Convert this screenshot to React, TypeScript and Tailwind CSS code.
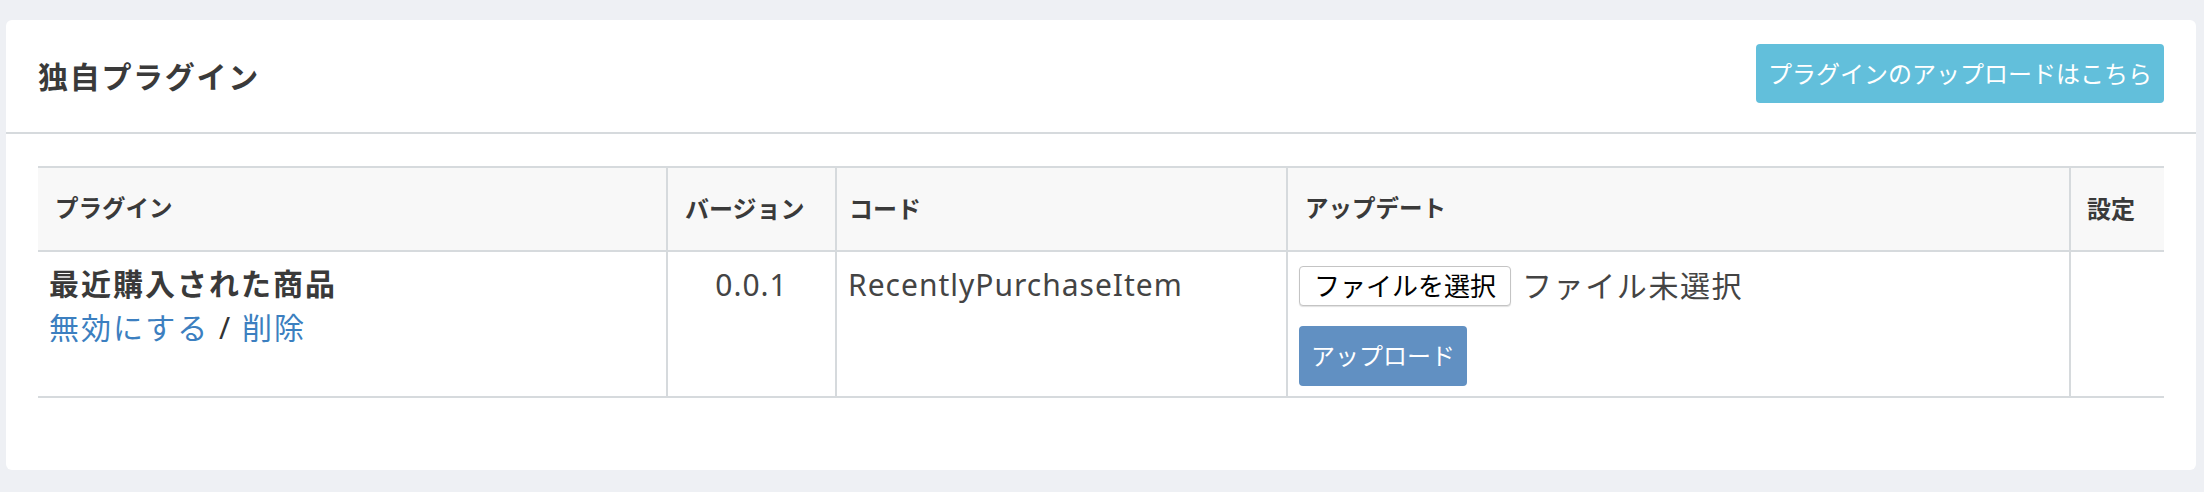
export default function App() {
  return (
    <div className="min-h-screen bg-[#eef0f4] pl-[6px] pr-[8px] pt-[20px] pb-[22px] font-['Noto_Sans','Noto_Sans_CJK_JP',sans-serif] text-[#333]">
      <div className="rounded-[6px] bg-white">
        {/* card header */}
        <div className="flex items-center justify-between border-b-2 border-[#d6dadd] px-[32px] pt-[24px] pb-[29px]">
          <h1 className="pt-[5px] text-[30px] leading-[45px] font-bold tracking-[1.7px] text-[#3a3a3a]">独自プラグイン</h1>
          <a
            href="#"
            className="rounded-[4px] bg-[#62bfdb] px-[12px] py-[12px] text-[24px] leading-[35px] text-white"
          >
            プラグインのアップロードはこちら
          </a>
        </div>

        {/* plugin table */}
        <div className="px-[32px] pt-[32px] pb-[72px]">
          <div className="grid grid-cols-[628px_169px_451px_783px_95px] border-t-2 border-[#d6dadd]">
            <div className="flex h-[84px] items-center border-b-2 border-[#d6dadd] bg-[#f8f8f8] px-[17px] text-[23.5px] font-bold text-[#3a3a3a]">
              プラグイン
            </div>
            <div className="flex h-[84px] items-center border-b-2 border-l-2 border-[#d6dadd] bg-[#f8f8f8] px-[17px] text-[24px] font-bold text-[#3a3a3a]">
              バージョン
            </div>
            <div className="flex h-[84px] items-center border-b-2 border-l-2 border-[#d6dadd] bg-[#f8f8f8] px-[12px] text-[24px] font-bold text-[#3a3a3a]">
              コード
            </div>
            <div className="flex h-[84px] items-center border-b-2 border-l-2 border-[#d6dadd] bg-[#f8f8f8] px-[17px] text-[23.5px] font-bold text-[#3a3a3a]">
              アップデート
            </div>
            <div className="flex h-[84px] items-center border-b-2 border-l-2 border-[#d6dadd] bg-[#f8f8f8] px-[16px] text-[24px] font-bold text-[#3a3a3a]">
              設定
            </div>

            {/* row */}
            <div className="border-b-2 border-[#d6dadd] px-[11px] pt-[10px] text-[30px] leading-[44px] tracking-[2px]">
              <div className="font-bold text-[#3a3a3a]">最近購入された商品</div>
              <div>
                <a href="#" className="text-[#3c7fc0]">無効にする</a>
                <span className="text-[#333]"> / </span>
                <a href="#" className="text-[#3c7fc0]">削除</a>
              </div>
            </div>
            <div className="border-b-2 border-l-2 border-[#d6dadd] pt-[10px] text-center text-[30px] leading-[45px] tracking-[1px] text-[#444]">
              0.0.1
            </div>
            <div className="border-b-2 border-l-2 border-[#d6dadd] px-[11px] pt-[10px] text-[30px] leading-[45px] tracking-[1px] text-[#444]">
              RecentlyPurchaseItem
            </div>
            <div className="border-b-2 border-l-2 border-[#d6dadd] px-[11px] pt-[11px] pb-[10px]">
              <div className="flex h-[45px] items-center gap-[11px]">
                <button className="h-[40px] rounded-[4px] border border-[#c4c4c4] bg-white px-[14px] text-[26px] leading-[36px] text-black shadow-[0_1px_1px_rgba(0,0,0,0.12)]">
                  ファイルを選択
                </button>
                <span className="text-[30px] leading-[45px] tracking-[1.6px] text-[#444]">ファイル未選択</span>
              </div>
              <button className="mt-[18px] h-[60px] rounded-[4px] bg-[#6190c2] px-[12px] text-[24px] leading-[36px] text-white">
                アップロード
              </button>
            </div>
            <div className="border-b-2 border-l-2 border-[#d6dadd]"></div>
          </div>
        </div>
      </div>
    </div>
  )
}
